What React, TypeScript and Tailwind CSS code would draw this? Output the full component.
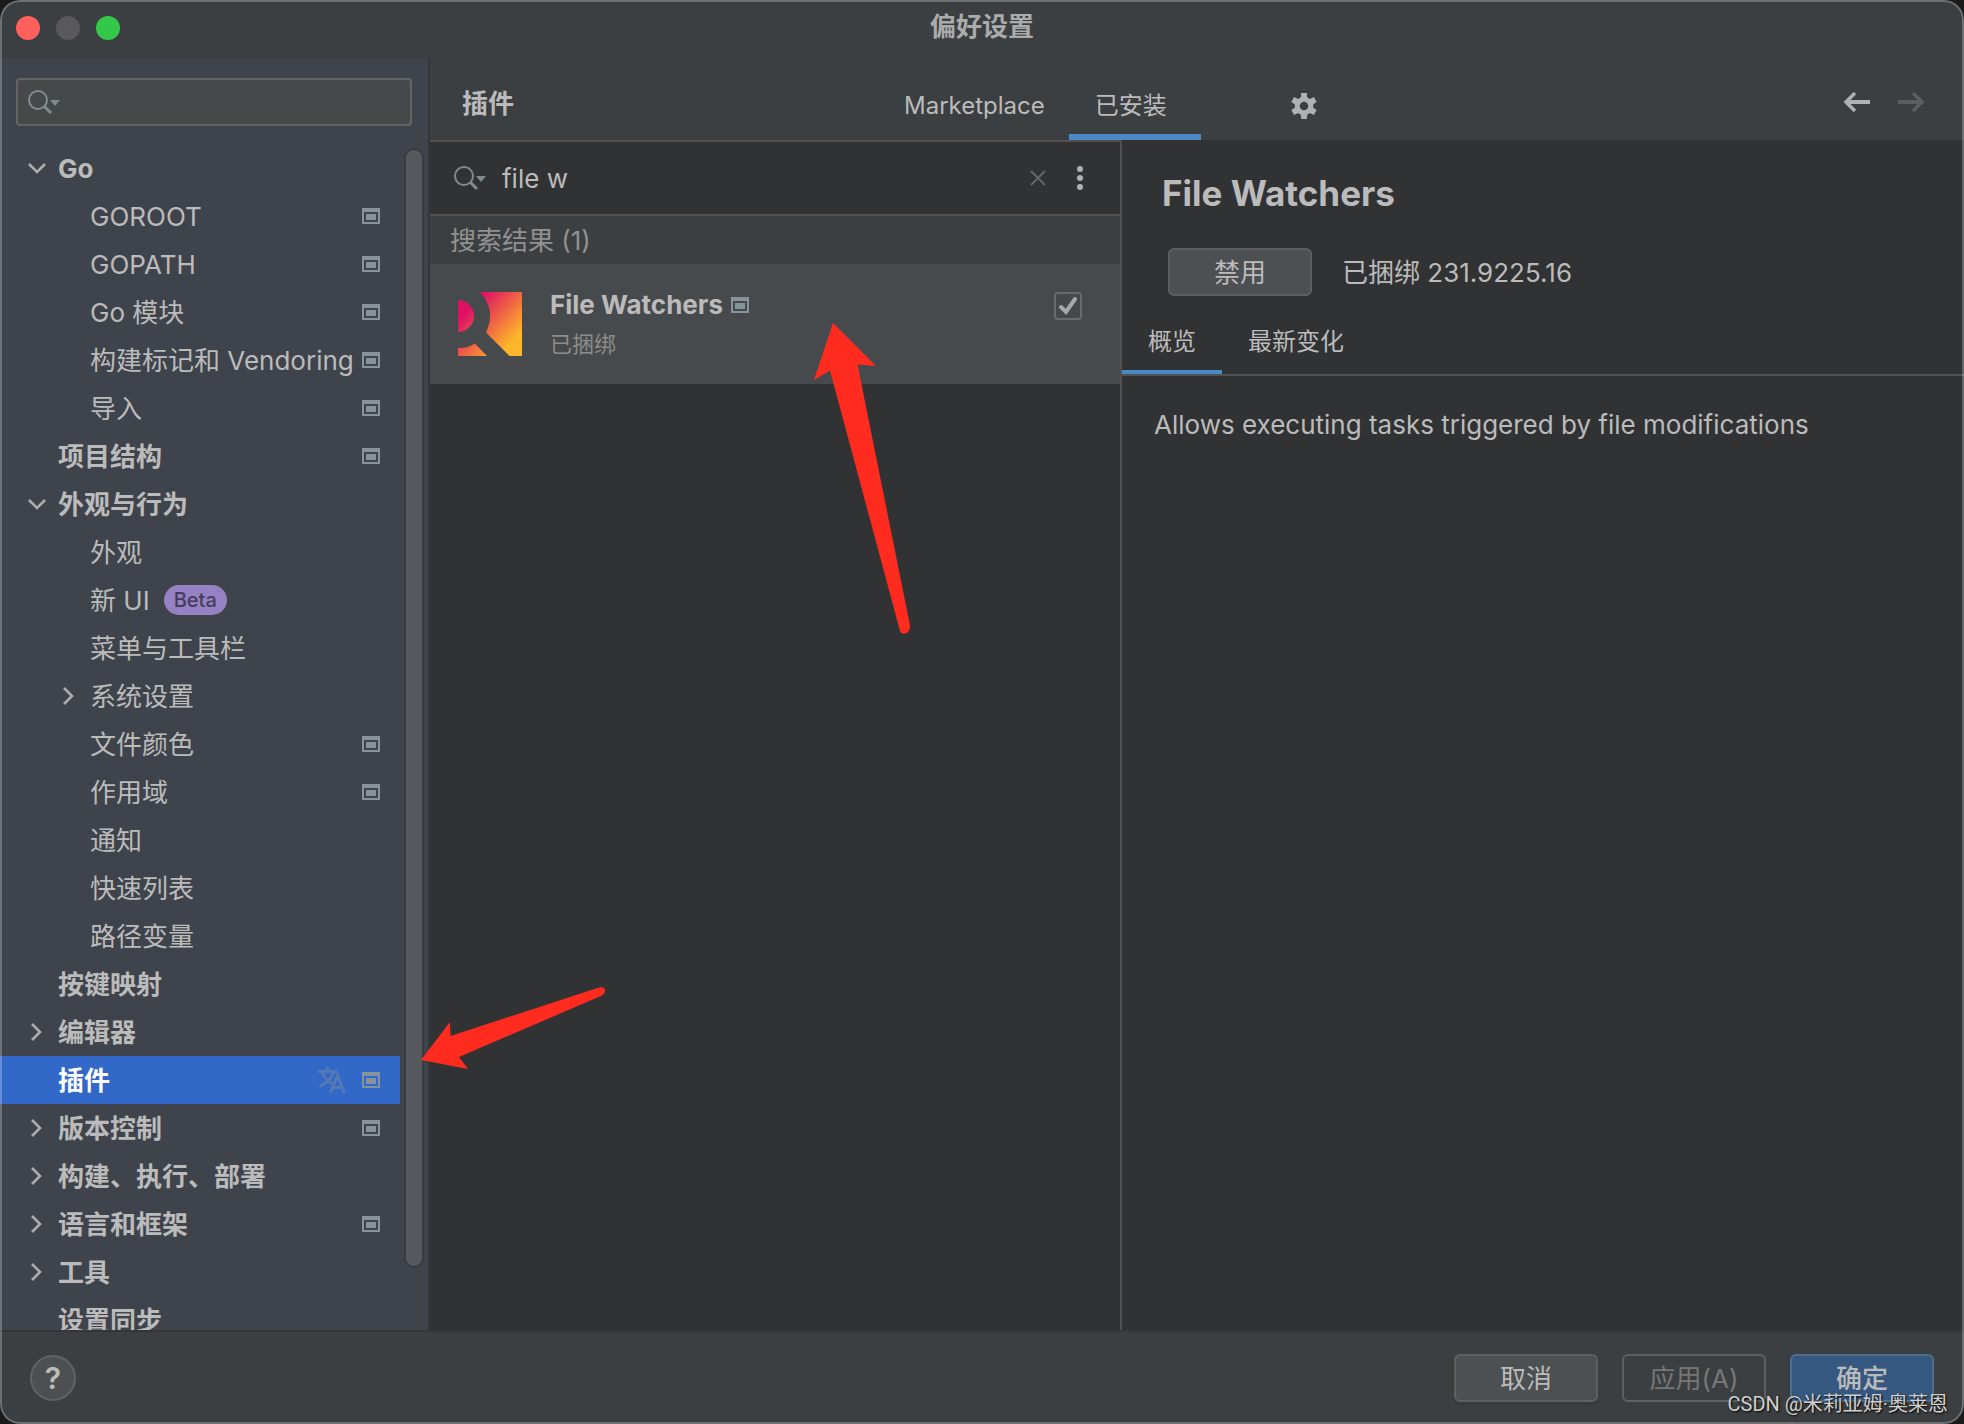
import { useState } from 'react';

interface TreeItem {
  name: string;
  level: 0 | 1;
  arrow?: 'open' | 'closed';
  project?: boolean;
  badge?: string;
}

const treeItems: TreeItem[] = [
  { name: 'Go', level: 0, arrow: 'open' },
  { name: 'GOROOT', level: 1, project: true },
  { name: 'GOPATH', level: 1, project: true },
  { name: 'Go 模块', level: 1, project: true },
  { name: '构建标记和 Vendoring', level: 1, project: true },
  { name: '导入', level: 1, project: true },
  { name: '项目结构', level: 0, project: true },
  { name: '外观与行为', level: 0, arrow: 'open' },
  { name: '外观', level: 1 },
  { name: '新 UI', level: 1, badge: 'Beta' },
  { name: '菜单与工具栏', level: 1 },
  { name: '系统设置', level: 1, arrow: 'closed' },
  { name: '文件颜色', level: 1, project: true },
  { name: '作用域', level: 1, project: true },
  { name: '通知', level: 1 },
  { name: '快速列表', level: 1 },
  { name: '路径变量', level: 1 },
  { name: '按键映射', level: 0 },
  { name: '编辑器', level: 0, arrow: 'closed' },
  { name: '插件', level: 0, project: true },
  { name: '版本控制', level: 0, arrow: 'closed', project: true },
  { name: '构建、执行、部署', level: 0, arrow: 'closed' },
  { name: '语言和框架', level: 0, arrow: 'closed', project: true },
  { name: '工具', level: 0, arrow: 'closed' },
  { name: '设置同步', level: 0 },
];

function ProjectIcon() {
  return (
    <svg width="18" height="16" viewBox="0 0 18 16" className="shrink-0 text-[#87939a]" fill="currentColor">
      <path fillRule="evenodd" d="M0 0h18v16H0zM2 4v10h14V4z" />
      <path d="M4 6h10v6H4z" />
    </svg>
  );
}

function SearchIcon() {
  return (
    <svg width="32" height="24" viewBox="0 0 32 24" className="shrink-0 text-[#7f8b91]" fill="none">
      <circle cx="10" cy="10" r="9" stroke="currentColor" strokeWidth="2" />
      <path d="M16 16l7 7" stroke="currentColor" strokeWidth="3" />
      <path d="M22 10h10l-5 6z" fill="currentColor" />
    </svg>
  );
}

function TranslateIcon() {
  return (
    <svg width="28" height="28" viewBox="0 0 28 28" className="shrink-0" fill="none" stroke="#5579b4" strokeWidth="3">
      <path d="M0 5.500h19M9.500 1v4.500M4 6c2 5 5.500 9 10 12M15.500 6C14 12 9 17 1.500 20.500" />
      <path d="M12.500 27L19.500 9.500L26.500 27M15 21.500h9" />
    </svg>
  );
}

function TreeArrow({ kind }: { kind: 'open' | 'closed' }) {
  return (
    <svg width="18" height="18" viewBox="0 0 18 18" className="shrink-0" fill="none" stroke="#adadad" strokeWidth="2.5">
      <path d={kind === 'open' ? 'M1 5l8 8 8-8' : 'M4 1l8 8-8 8'} />
    </svg>
  );
}

function GearIcon() {
  return (
    <svg width="26" height="26" viewBox="-13 -13 26 26" fill="#afb1b3">
      <circle r="6.8" fill="none" stroke="#afb1b3" strokeWidth="5" />
      {[0, 60, 120, 180, 240, 300].map((angle) => (
        <path key={angle} d="M-3.2 -8L-2.8 -13H2.8L3.2 -8z" transform={`rotate(${angle})`} />
      ))}
    </svg>
  );
}

function PluginLogo() {
  return (
    <svg width="64" height="64" viewBox="0 0 64 64" className="shrink-0">
      <defs>
        <linearGradient id="logo" gradientUnits="userSpaceOnUse" x1="14" y1="14" x2="58" y2="54">
          <stop offset="0" stopColor="#dd1265" />
          <stop offset="0.5" stopColor="#f16c41" />
          <stop offset="0.9" stopColor="#fdb62b" />
        </linearGradient>
      </defs>
      <g fill="url(#logo)">
        <path d="M21.5 0H64V64H51.5L28 40.5C35 26 33 11 21.5 0z" />
        <path d="M0 8A16 16 0 0 1 0 40z" />
        <path d="M0 56C7 56 12 54.5 17 51.5L29 64H0z" />
      </g>
    </svg>
  );
}

function Sidebar() {
  const [selected, setSelected] = useState('插件');

  return (
    <aside className="w-[430px] shrink-0 flex flex-col min-h-0 bg-[#3f434c] border-r-2 border-[#353638]">
      <div className="px-4 pt-5 pb-[18px]">
        <label className="flex items-center h-12 px-[10px] bg-[#45494a] border-2 border-[#646464] rounded">
          <SearchIcon />
          <input aria-label="搜索设置" className="flex-1 min-w-0 ml-2 bg-transparent outline-none" />
        </label>
      </div>
      <div className="flex flex-1 min-h-0">
        <ul className="flex-1 min-w-0 overflow-hidden">
          {treeItems.map((item) => {
            const active = item.name === selected;
            return (
              <li key={item.name}>
                <button
                  onClick={() => setSelected(item.name)}
                  className={`flex items-center w-full h-12 pr-5 text-left whitespace-nowrap ${
                    item.level === 0 ? 'pl-7 font-bold' : 'pl-[60px]'
                  } ${active ? 'bg-[#3268c8] text-white' : ''}`}
                >
                  <span className="w-[30px] shrink-0 flex">{item.arrow && <TreeArrow kind={item.arrow} />}</span>
                  <span className="leading-[46px] pt-[2px]">{item.name}</span>
                  {item.badge && (
                    <span className="ml-[14px] px-[10px] rounded-full bg-[#9682c3] text-[#453c5c] text-xl leading-[30px] font-medium">
                      {item.badge}
                    </span>
                  )}
                  <span className="ml-auto flex items-center gap-4">
                    {active && <TranslateIcon />}
                    {item.project && <ProjectIcon />}
                  </span>
                </button>
              </li>
            );
          })}
        </ul>
        <div className="w-5 mx-1 pt-1 pb-[62px]">
          <div className="h-full rounded-full bg-[#55585c] border-2 border-[#383b40]" />
        </div>
      </div>
    </aside>
  );
}

function PluginsHeader() {
  return (
    <header className="flex h-[82px] shrink-0">
      <h1 className="w-[448px] pl-8 pt-[26px] font-bold">插件</h1>
      <nav className="flex text-2xl leading-8">
        <button className="pl-[26px] pr-6 pt-8 pb-3 border-b-6 border-transparent">Marketplace</button>
        <button className="w-[132px] pl-[26px] pt-8 pb-3 text-left border-b-6 border-[#4a88c7]">已安装</button>
      </nav>
      <button aria-label="设置" className="ml-[90px] pt-[14px]">
        <GearIcon />
      </button>
      <div className="ml-auto mr-10 pt-[6px] flex items-center gap-7">
        <button aria-label="后退">
          <svg width="26" height="20" viewBox="0 0 26 20" fill="none" stroke="#afb1b3">
            <path d="M2 10h24" strokeWidth="4" />
            <path d="M11 1l-9 9 9 9" strokeWidth="3.5" />
          </svg>
        </button>
        <button aria-label="前进">
          <svg width="26" height="20" viewBox="0 0 26 20" fill="none" stroke="#5c5d5e">
            <path d="M24 10H0" strokeWidth="4" />
            <path d="M15 1l9 9-9 9" strokeWidth="3.5" />
          </svg>
        </button>
      </div>
    </header>
  );
}

function PluginList() {
  const [query, setQuery] = useState('file w');
  const [enabled, setEnabled] = useState(true);

  return (
    <section className="border-r-2 border-t-2 border-[#515151] min-w-0">
      <div className="flex items-center h-[74px] pl-6 pr-8 border-b-2 border-[#515151]">
        <SearchIcon />
        <input
          aria-label="搜索插件"
          value={query}
          onChange={(e) => setQuery(e.target.value)}
          className="flex-1 min-w-0 ml-4 bg-transparent outline-none"
        />
        <button aria-label="清除" onClick={() => setQuery('')}>
          <svg width="16" height="16" viewBox="0 0 16 16" stroke="#5f686c" strokeWidth="2">
            <path d="M1 1l14 14M15 1L1 15" />
          </svg>
        </button>
        <button aria-label="更多" className="ml-[26px]">
          <svg width="16" height="24" viewBox="0 0 16 24" fill="#afb1b3">
            <circle cx="8" cy="3" r="3" />
            <circle cx="8" cy="12" r="3" />
            <circle cx="8" cy="21" r="3" />
          </svg>
        </button>
      </div>
      <h2 className="h-12 pl-5 leading-[50px] bg-[#3c3f41] text-[#919191]">搜索结果 (1)</h2>
      <div className="flex items-start h-[120px] pl-7 pr-[38px] pt-7 bg-[#464a4c]">
        <PluginLogo />
        <div className="ml-7 flex-1 min-w-0">
          <div className="flex items-center gap-2 font-bold">
            <span className="leading-[26px]">File Watchers</span>
            <ProjectIcon />
          </div>
          <p className="mt-[10px] text-[22px] leading-8 text-[#8c8c8c]">已捆绑</p>
        </div>
        <div className="relative size-7">
          <input
            type="checkbox"
            aria-label="启用 File Watchers"
            checked={enabled}
            onChange={(e) => setEnabled(e.target.checked)}
            className="block size-7 appearance-none rounded border-2 border-[#6b6b6b] bg-[#43494a]"
          />
          {enabled && (
            <svg viewBox="0 0 28 28" className="absolute inset-0 pointer-events-none" fill="none">
              <path d="M7 15l5 5 9-13" stroke="#a7a7a7" strokeWidth="4" strokeLinecap="round" />
            </svg>
          )}
        </div>
      </div>
    </section>
  );
}

function PluginDetails() {
  return (
    <section className="min-w-0">
      <h2 className="pl-10 pt-8 text-[35px] leading-[42px] font-bold">File Watchers</h2>
      <div className="flex items-center pl-[46px] mt-[34px]">
        <button className="w-36 h-12 rounded-md border-2 border-[#5e6060] bg-[#4c5052]">禁用</button>
        <span className="ml-[30px]">已捆绑 231.9225.16</span>
      </div>
      <div className="flex mt-6 text-2xl leading-[44px] border-b-2 border-[#515151]">
        <button className="px-[26px] pb-[6px] border-b-4 border-[#4a88c7]">概览</button>
        <button className="px-[26px] pb-[6px] border-b-4 border-transparent">最新变化</button>
      </div>
      <p className="pl-8 pt-8 leading-[34px]">Allows executing tasks triggered by file modifications</p>
    </section>
  );
}

function Footer() {
  return (
    <footer className="flex items-center h-[94px] shrink-0 px-[30px] gap-6 border-t-2 border-[#353638]">
      <button
        aria-label="帮助"
        className="mr-auto size-[46px] rounded-full border-2 border-[#606263] bg-[#4c5052] text-[30px] leading-none font-semibold"
      >
        ?
      </button>
      <button className="w-36 h-12 rounded-md border-2 border-[#5e6060] bg-[#4c5052] shadow-[0_3px_2px_#37393b]">取消</button>
      <button disabled className="w-36 h-12 rounded-md border-2 border-[#5e6060] text-[#777777]">
        应用(A)
      </button>
      <button className="w-36 h-12 rounded-md border-2 border-[#4c708c] bg-[#365880] font-medium">确定</button>
    </footer>
  );
}

function Arrows() {
  return (
    <svg className="absolute left-0 top-0 pointer-events-none" width="940" height="1100" fill="#ff2b1e">
      <path d="M833 323L876 366L857.5 364.5L909.7 624Q911 633 904 633.7Q901 634 900 631L830 370.5L814 380z" />
      <path d="M421 1060L450 1022L450.5 1036L599 987.5Q604 986.5 605 990Q605.5 993 602 995.5L459 1057L468 1069z" />
    </svg>
  );
}

export default function App() {
  return (
    <div className="h-screen bg-[#1b1b1c]">
      <div className="relative h-full flex flex-col overflow-hidden rounded-[20px] bg-[#3c3f41] text-[#bbbbbb] text-[26px] font-['Inter','Noto_Sans_CJK_SC',sans-serif]">
        {/* Title bar */}
        <div className="grid grid-cols-[1fr_auto_1fr] h-[58px] shrink-0 px-4 pt-[3px]">
          <div className="flex gap-4 pt-[13px]">
            <span className="size-6 rounded-full bg-[#ff605c]" />
            <span className="size-6 rounded-full bg-[#59595b]" />
            <span className="size-6 rounded-full bg-[#34c84a]" />
          </div>
          <div className="leading-[48px] font-bold text-[#a9abac]">偏好设置</div>
        </div>

        <div className="flex flex-1 min-h-0">
          <Sidebar />
          <main className="flex-1 min-w-0 flex flex-col">
            <PluginsHeader />
            <div className="flex-1 min-h-0 grid grid-cols-[692fr_842fr] bg-[#313234]">
              <PluginList />
              <PluginDetails />
            </div>
          </main>
        </div>

        <Footer />

        {/* Window outline */}
        <div className="absolute inset-0 rounded-[20px] border-2 border-white/25 pointer-events-none" />
        <Arrows />
        <div className="absolute right-4 bottom-1 text-xl leading-8 text-[#d0d0d0] font-['Roboto','Noto_Sans_CJK_SC',sans-serif] [text-shadow:1px_1px_2px_#000]">
          CSDN @米莉亚姆·奥莱恩
        </div>
      </div>
    </div>
  );
}
